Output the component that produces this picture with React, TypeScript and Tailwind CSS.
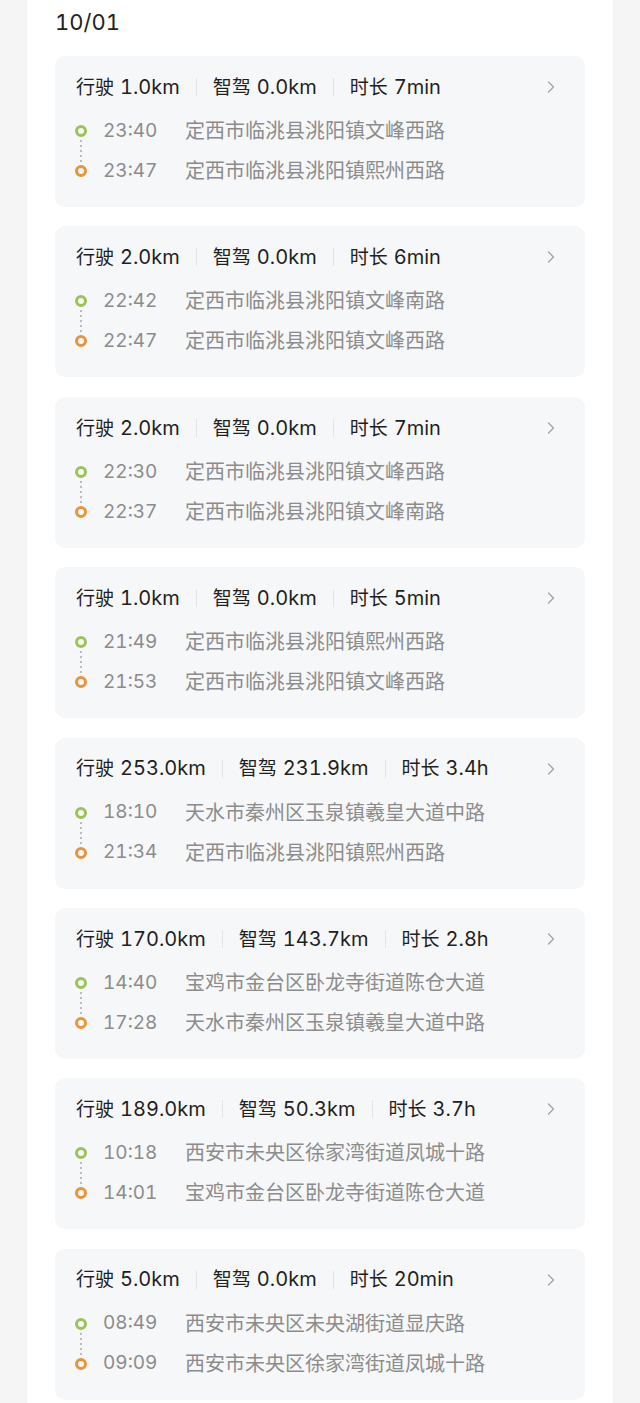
import { ChevronRight } from "lucide-react";

type Trip = {
    drive: string;
    smart: string;
    duration: string;
    start: [string, string];
    end: [string, string];
};

const trips: Trip[] = [
    { drive: "1.0km", smart: "0.0km", duration: "7min", start: ["23:40", "定西市临洮县洮阳镇文峰西路"], end: ["23:47", "定西市临洮县洮阳镇熙州西路"] },
    { drive: "2.0km", smart: "0.0km", duration: "6min", start: ["22:42", "定西市临洮县洮阳镇文峰南路"], end: ["22:47", "定西市临洮县洮阳镇文峰西路"] },
    { drive: "2.0km", smart: "0.0km", duration: "7min", start: ["22:30", "定西市临洮县洮阳镇文峰西路"], end: ["22:37", "定西市临洮县洮阳镇文峰南路"] },
    { drive: "1.0km", smart: "0.0km", duration: "5min", start: ["21:49", "定西市临洮县洮阳镇熙州西路"], end: ["21:53", "定西市临洮县洮阳镇文峰西路"] },
    { drive: "253.0km", smart: "231.9km", duration: "3.4h", start: ["18:10", "天水市秦州区玉泉镇羲皇大道中路"], end: ["21:34", "定西市临洮县洮阳镇熙州西路"] },
    { drive: "170.0km", smart: "143.7km", duration: "2.8h", start: ["14:40", "宝鸡市金台区卧龙寺街道陈仓大道"], end: ["17:28", "天水市秦州区玉泉镇羲皇大道中路"] },
    { drive: "189.0km", smart: "50.3km", duration: "3.7h", start: ["10:18", "西安市未央区徐家湾街道凤城十路"], end: ["14:01", "宝鸡市金台区卧龙寺街道陈仓大道"] },
    { drive: "5.0km", smart: "0.0km", duration: "20min", start: ["08:49", "西安市未央区未央湖街道显庆路"], end: ["09:09", "西安市未央区徐家湾街道凤城十路"] },
];

const font = { fontFamily: 'Inter, "Noto Sans CJK SC", sans-serif' };

function Divider() {
    return <span className="mx-[16px] h-[18px] w-px bg-[#e3e4e7]" />;
}

function Stat({ label, value }: { label: string; value: string }) {
    return (
        <span className="flex items-baseline">
            <span className="mr-[6px] text-[19px]">{label}</span>
            <span className="text-[20px] tabular-nums">{value}</span>
        </span>
    );
}

function TripCard({ trip }: { trip: Trip }) {
    return (
        <div className="rounded-[10px] bg-[#f6f7f9] pl-[20px] pr-[24px] pt-[18px] pb-[16px]">
            <div className="flex h-[26px] items-center pl-[1px] text-[#1f1f1f]">
                <Stat label="行驶" value={trip.drive} />
                <Divider />
                <Stat label="智驾" value={trip.smart} />
                <Divider />
                <Stat label="时长" value={trip.duration} />
                <ChevronRight className="ml-auto h-[20px] w-[20px] text-[#a3a3a3]" strokeWidth={1.5} />
            </div>
            <div className="mt-[11px] flex">
                <div className="flex h-[80px] w-[12px] flex-col items-center py-[14px]">
                    <span className="h-[12px] w-[12px] rounded-full border-[3px] border-[#9cc35a]" />
                    <span className="my-[3px] w-[2px] flex-1 bg-[repeating-linear-gradient(to_bottom,#bcbcbc_0_2px,transparent_2px_5px)]" />
                    <span className="h-[12px] w-[12px] rounded-full border-[3px] border-[#e8953a]" />
                </div>
                <div className="ml-[16px] flex flex-col text-[20px] text-[#8c8c8c]">
                    {[trip.start, trip.end].map(([time, place]) => (
                        <div key={time} className="flex h-[40px] items-center">
                            <span className="w-[82px] text-[19px] tabular-nums">{time}</span>
                            <span>{place}</span>
                        </div>
                    ))}
                </div>
            </div>
        </div>
    );
}

export default function App() {
    return (
        <div className="flex min-h-screen justify-center bg-[#f5f5f5]" style={font}>
            <div className="w-[586px] bg-white px-[28px]">
                <h1 className="mt-[8px] text-[22px] leading-[28px] text-[#222] tabular-nums">10/01</h1>
                <div className="mt-[20px] flex flex-col gap-[19.4px]">
                    {trips.map((trip, i) => (
                        <TripCard key={i} trip={trip} />
                    ))}
                </div>
            </div>
        </div>
    );
}
